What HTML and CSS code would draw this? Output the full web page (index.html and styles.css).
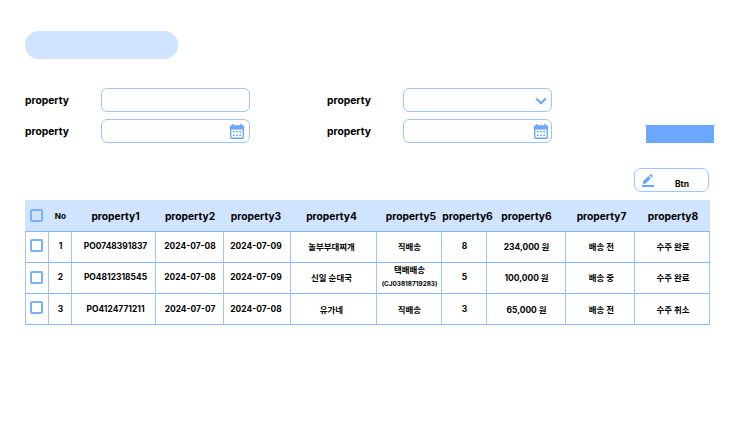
FILE: index.html
```html
<!DOCTYPE html>
<html lang="ko">
<head>
<meta charset="utf-8">
<title>Orders</title>
<link rel="stylesheet" href="styles.css">
</head>
<body>
<svg class="defs" width="0" height="0">
  <symbol id="calendar" viewBox="0 0 14 15">
    <path fill="#6ba6ff" fill-rule="evenodd" d="M1.4 1.200H2.200V.4a.6.6 0 0 1 1.600 0v.8h6.400V.4a.6.6 0 0 1 1.600 0v.8h.8A1.400 1.400 0 0 1 14 2.600V13.600A1.400 1.400 0 0 1 12.600 15H1.400A1.400 1.400 0 0 1 0 13.600V2.600A1.400 1.400 0 0 1 1.400 1.200ZM1.400 5.600V13.600H12.600V5.600Z"/>
    <path fill="#6ba6ff" d="M3 7h1.700v1.500H3zM6.150 7h1.700v1.500h-1.700zM9.300 7H11v1.500H9.300zM3 10.400h1.700v1.500H3zM6.150 10.400h1.700v1.500h-1.700zM9.300 10.400H11v1.500H9.300z"/>
  </symbol>
</svg>
<main class="page">
  <div class="title"></div>
  <div class="search">
    <div class="filters">
      <span class="label">property</span><div class="field"></div>
      <span class="label">property</span><div class="field"><svg class="chevron" viewBox="0 0 12 8"><path d="M1.200 1.500 6 6.300l4.800-4.800" fill="none" stroke="#6ba6ff" stroke-width="2"/></svg></div>
      <span class="label">property</span><div class="field"><svg class="calendar"><use href="#calendar"/></svg></div>
      <span class="label">property</span><div class="field"><svg class="calendar near"><use href="#calendar"/></svg></div>
    </div>
    <div class="submit"></div>
  </div>
  <button class="btn"><svg viewBox="0 0 12 13"><path fill="#6ba6ff" d="M0 11h12v2H0zM1 9.700V7.300L6.500 1.900 8.900 4.300 3.400 9.700zM7.200 1.200 8.200.300q.500-.400 1 0l1.400 1.400q.400.500 0 1L9.600 3.600z"/></svg><span>Btn</span></button>
  <div class="table">
    <div class="row head">
      <div><i class="check"></i></div><div class="no">No</div><div class="c1">property1</div><div class="c2">property2</div><div class="c3">property3</div><div class="c4">property4</div><div class="c5">property5</div><div class="c6">property6</div><div class="c7">property6</div><div class="c8">property7</div><div class="c9">property8</div>
    </div>
    <div class="row">
      <div><i class="check"></i></div><div>1</div><div class="c1">PO0748391837</div><div class="c2">2024-07-08</div><div class="c3">2024-07-09</div><div class="c4">놀부부대찌개</div><div>직배송</div><div>8</div><div>234,000 원</div><div class="c8">배송 전</div><div class="c9">수주 완료</div>
    </div>
    <div class="row">
      <div><i class="check"></i></div><div>2</div><div class="c1">PO4812318545</div><div class="c2">2024-07-08</div><div class="c3">2024-07-09</div><div class="c4">신일 순대국</div><div class="ship"><span>택배배송</span><small>(CJ03818719283)</small></div><div>5</div><div>100,000 원</div><div class="c8">배송 중</div><div class="c9">수주 완료</div>
    </div>
    <div class="row last">
      <div><i class="check"></i></div><div>3</div><div class="c1">PO4124771211</div><div class="c2">2024-07-07</div><div class="c3">2024-07-08</div><div class="c4">유가네</div><div>직배송</div><div>3</div><div>65,000 원</div><div class="c8">배송 전</div><div class="c9">수주 취소</div>
    </div>
  </div>
</main>
</body>
</html>
```
FILE: styles.css
```css
* { box-sizing: border-box; }
body {
  margin: 0;
  background: #fff;
  color: #000;
  font-family: Inter, "Noto Sans CJK KR", sans-serif;
  font-weight: 700;
}
.defs { display: block; height: 0; }
.page { width: 740px; height: 423px; padding: 31px 26px 0 25px; overflow: hidden; }
.title { width: 153px; height: 28px; border-radius: 14px; background: #d0e3ff; }
.search { display: flex; margin-top: 29px; }
.filters {
  display: grid;
  grid-template-columns: 76px 226px 76px 149px;
  grid-template-rows: 24px 24px;
  row-gap: 7px;
}
.label { font-size: 10.3px; line-height: 24px; }
.field {
  display: flex;
  align-items: center;
  justify-content: flex-end;
  width: 149px;
  height: 24px;
  padding-right: 5px;
  border: 1px solid #9fc5ff;
  border-radius: 6px;
}
.chevron { width: 12px; height: 8px; margin-top: 1px; margin-right: -1px; }
.calendar { width: 14px; height: 15px; }
.near { margin-right: -2px; }
.submit { width: 68px; height: 18px; margin: 37px 0 0 94px; background: #6ba6ff; }
.btn {
  display: flex;
  width: 75px;
  height: 24px;
  margin: 25px 0 0 609px;
  padding: 5px 0 0 7px;
  border: 1px solid #9fc5ff;
  border-radius: 7px;
  background: #fff;
  color: #000;
  font: 700 8.500px/20px Inter, sans-serif;
}
.btn svg { width: 12px; height: 13px; }
.btn span { margin-left: 21px; }
.table { margin-top: 8px; width: 685px; }
.row {
  display: grid;
  grid-template-columns: 24px 23px 84px 68px 67px 86px 65px 45px 79px 69px 75px;
  height: 31px;
  border-bottom: 1px solid #86b6ff;
  font-size: 8.450px;
}
.row > div {
  display: flex;
  align-items: center;
  justify-content: center;
  padding: 0 0 3px 1px;
  white-space: nowrap;
  border-right: 1px solid #9fc5ff;
}
.row > div:first-child { padding: 0 1px 3px 0; border-left: 1px solid #9fc5ff; }
.row.head { height: 32px; background: #d0e3ff; font-size: 10.250px; }
.row.head > div { border-color: transparent; padding-bottom: 0; }
.row.head > .no { font-size: 8.200px; }
.check { width: 13px; height: 13px; border: 2px solid #78afff; border-radius: 2px; }
.row .c1 { padding-left: 4px; }
.row .c2 { padding-left: 1px; }
.row .c3 { padding-left: 0; padding-right: 2px; }
.row .c4 { padding-right: 5px; }
.row .c8 { padding-left: 3px; }
.row .c9 { padding-left: 2px; }
.head .c5 { padding-left: 4px; }
.head .c6 { padding-left: 7px; }
.last > div:not(:first-child) { padding-top: 2px; padding-bottom: 2px; }
.row.last > div:first-child { padding-bottom: 4px; }
.row > .ship { flex-direction: column; line-height: 14px; }
.ship small { font-size: 6.400px; line-height: 14px; }
```
